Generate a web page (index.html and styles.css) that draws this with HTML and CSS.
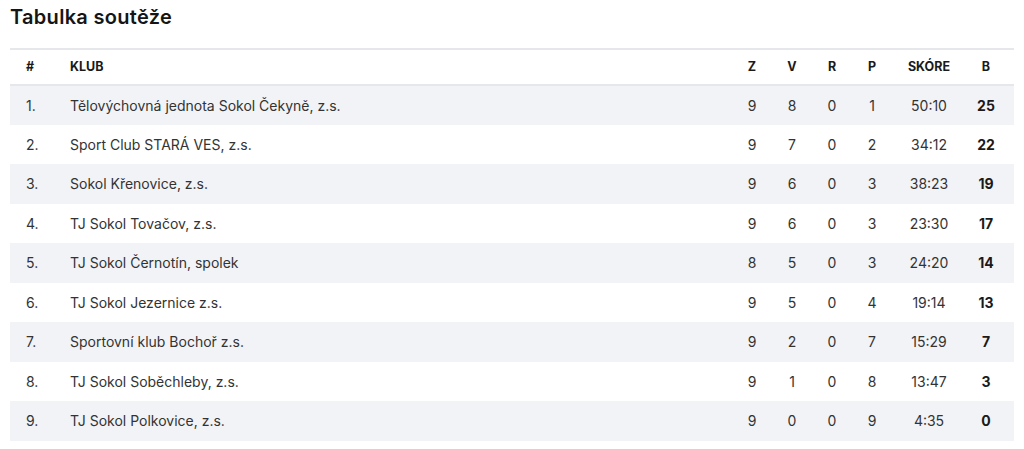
FILE: index.html
```html
<!DOCTYPE html>
<html lang="cs">
<head>
<meta charset="utf-8">
<link rel="stylesheet" href="styles.css">
</head>
<body>
<div class="page">
  <h2 class="title">Tabulka soutěže</h2>
  <table class="standings">
    <colgroup>
      <col class="c-rank"><col class="c-club"><col class="c-n"><col class="c-n"><col class="c-n"><col class="c-n"><col class="c-score"><col class="c-pts">
    </colgroup>
    <thead>
      <tr><th class="rank">#</th><th class="club">Klub</th><th>Z</th><th>V</th><th>R</th><th>P</th><th>Skóre</th><th class="pts">B</th></tr>
    </thead>
    <tbody>
      <tr><td class="rank">1.</td><td class="club">Tělovýchovná jednota Sokol Čekyně, z.s.</td><td>9</td><td>8</td><td>0</td><td>1</td><td>50:10</td><td class="pts">25</td></tr>
      <tr><td class="rank">2.</td><td class="club">Sport Club STARÁ VES, z.s.</td><td>9</td><td>7</td><td>0</td><td>2</td><td>34:12</td><td class="pts">22</td></tr>
      <tr><td class="rank">3.</td><td class="club">Sokol Křenovice, z.s.</td><td>9</td><td>6</td><td>0</td><td>3</td><td>38:23</td><td class="pts">19</td></tr>
      <tr><td class="rank">4.</td><td class="club">TJ Sokol Tovačov, z.s.</td><td>9</td><td>6</td><td>0</td><td>3</td><td>23:30</td><td class="pts">17</td></tr>
      <tr><td class="rank">5.</td><td class="club">TJ Sokol Černotín, spolek</td><td>8</td><td>5</td><td>0</td><td>3</td><td>24:20</td><td class="pts">14</td></tr>
      <tr><td class="rank">6.</td><td class="club">TJ Sokol Jezernice z.s.</td><td>9</td><td>5</td><td>0</td><td>4</td><td>19:14</td><td class="pts">13</td></tr>
      <tr><td class="rank">7.</td><td class="club">Sportovní klub Bochoř z.s.</td><td>9</td><td>2</td><td>0</td><td>7</td><td>15:29</td><td class="pts">7</td></tr>
      <tr><td class="rank">8.</td><td class="club">TJ Sokol Soběchleby, z.s.</td><td>9</td><td>1</td><td>0</td><td>8</td><td>13:47</td><td class="pts">3</td></tr>
      <tr><td class="rank">9.</td><td class="club">TJ Sokol Polkovice, z.s.</td><td>9</td><td>0</td><td>0</td><td>9</td><td>4:35</td><td class="pts">0</td></tr>
    </tbody>
  </table>
</div>
</body>
</html>
```
FILE: styles.css
```css
* { box-sizing: border-box; }
html, body { margin: 0; padding: 0; background: #fff; }
body { font-family: "Inter", "Roboto", "Liberation Sans", sans-serif; color: #333; }
.page { padding: 6px 10px 0 10px; }
.title {
  margin: 0 0 20px 0;
  font-size: 20px;
  line-height: 22px;
  font-weight: 600;
  color: #151515;
  letter-spacing: 0.3px;
}
.standings {
  width: 100%;
  border-collapse: collapse;
  border-top: 2px solid #e6e7ea;
  table-layout: fixed;
}
.c-rank { width: 50px; }
.c-n { width: 40px; }
.c-score { width: 74px; }
.c-pts { width: 48px; }
.standings th {
  height: 36px;
  font-size: 12.5px;
  line-height: 14px;
  font-weight: 700;
  text-transform: uppercase;
  color: #1a1a1a;
  text-align: center;
  padding: 0 0 1px 0;
  border-bottom: 2px solid #e6e7ea;
}
.standings td {
  height: 39.5px;
  font-size: 14px;
  text-align: center;
  padding: 0;
  color: #333;
}
.standings .rank { text-align: left; padding-left: 16px; }
.standings .club { text-align: left; padding-left: 10px; }
.standings .pts { padding-right: 8px; }
.standings td.pts { font-weight: 700; color: #1a1a1a; }
.standings tbody tr:nth-child(odd) { background: #f2f3f7; }
```
